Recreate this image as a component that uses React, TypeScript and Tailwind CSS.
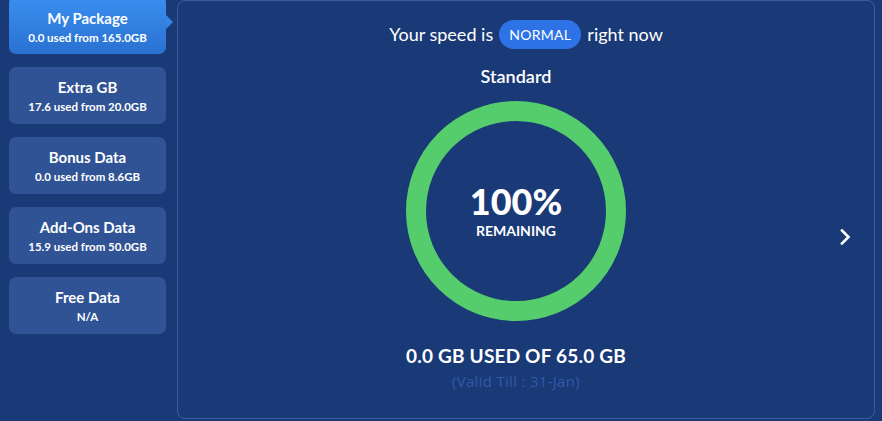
import React from "react";

const cards = [
  { title: "Extra GB", sub: "17.6 used from 20.0GB" },
  { title: "Bonus Data", sub: "0.0 used from 8.6GB" },
  { title: "Add-Ons Data", sub: "15.9 used from 50.0GB" },
  { title: "Free Data", sub: "N/A" },
];

export default function App() {
  return (
    <div
      className="w-[882px] h-[421px] bg-[#1a3977] flex overflow-hidden text-white"
      style={{ fontFamily: "Lato, 'Open Sans', sans-serif" }}
    >
      <div className="w-[177px] shrink-0 pl-[9px] pr-[11px] flex flex-col gap-[13px] -mt-[4px]">
        <div className="relative h-[58px] rounded-[7px] bg-gradient-to-b from-[#3a8ff0] to-[#2a71d1] flex flex-col items-center justify-center">
          <div className="text-[15px] font-bold leading-[18px] mt-[3px]">My Package</div>
          <div className="text-[11.5px] font-bold leading-[15px] mt-[3px]">0.0 used from 165.0GB</div>
          <div className="absolute right-[-7px] top-[19px] w-0 h-0 border-y-[7px] border-y-transparent border-l-[7px] border-l-[#3483e6]" />
        </div>
        {cards.map((c) => (
          <div
            key={c.title}
            className="h-[57px] rounded-[7px] bg-[#2f5394] flex flex-col items-center justify-center"
          >
            <div className="text-[15px] font-bold leading-[18px] mt-[1px]">{c.title}</div>
            <div className="text-[11.5px] font-bold leading-[15px] mt-[3px]">{c.sub}</div>
          </div>
        ))}
      </div>
      <div className="relative flex-1 mr-[7px] mb-[2px] rounded-[8px] border border-[#3a5c9d] flex flex-col items-center pr-[20px]">
        <div className="flex items-center mt-[19px] ml-[20px] text-[18px]">
          <span>Your speed is</span>
          <span className="mx-[6px] h-[29px] px-[10px] rounded-full bg-[#2d72e6] text-[14px] flex items-center tracking-[0.3px]">
            NORMAL
          </span>
          <span>right now</span>
        </div>
        <div className="mt-[16px] text-[18px] font-semibold leading-[22px]">Standard</div>
        <div className="mt-[14px] w-[220px] h-[220px] rounded-full border-[20px] border-[#55cd6c] flex flex-col items-center justify-center">
          <div className="text-[36px] font-black leading-[43px] mt-[-4px]">100%</div>
          <div className="text-[14px] font-bold leading-[16px]">REMAINING</div>
        </div>
        <div className="mt-[24px] text-[19px] font-bold leading-[22px] tracking-[0.2px]">0.0 GB USED OF 65.0 GB</div>
        <div
          className="mt-[5px] text-[15px] text-[#2f5aa8] leading-[18px] tracking-[0.3px]"
          style={{ fontFamily: "'Open Sans', sans-serif" }}
        >
          (Valid Till : 31-Jan)
        </div>
        <svg
          className="absolute right-[22px] top-[227px]"
          width="14"
          height="18"
          viewBox="0 0 14 18"
          fill="none"
        >
          <path d="M4 2.5 L10.5 9 L4 15.5" stroke="white" strokeWidth="2.6" strokeLinecap="square" />
        </svg>
      </div>
    </div>
  );
}
